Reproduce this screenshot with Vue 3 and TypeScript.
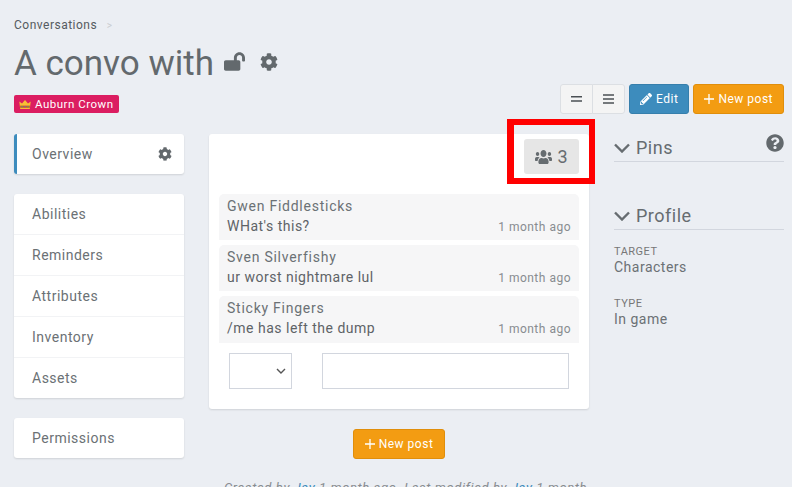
<script setup lang="ts">
const COG = 'M487.4 315.7l-42.6-24.6c4.3-23.2 4.3-47 0-70.2l42.6-24.6c4.9-2.8 7.1-8.6 5.5-14-11.1-35.6-30-67.8-54.7-94.6-3.8-4.1-10-5.1-14.8-2.3L380.8 110c-17.9-15.4-38.5-27.3-60.8-35.1V25.8c0-5.6-3.9-10.5-9.4-11.7-36.7-8.2-74.3-7.8-109.2 0-5.5 1.2-9.4 6.1-9.4 11.7V75c-22.2 7.9-42.8 19.8-60.8 35.1L88.7 85.5c-4.9-2.8-11-1.9-14.8 2.3-24.7 26.7-43.6 58.9-54.7 94.6-1.7 5.4.6 11.2 5.5 14L67.3 221c-4.3 23.2-4.3 47 0 70.2l-42.6 24.6c-4.9 2.8-7.1 8.6-5.5 14 11.1 35.6 30 67.8 54.7 94.6 3.8 4.1 10 5.1 14.8 2.3l42.6-24.6c17.9 15.4 38.5 27.3 60.8 35.1v49.2c0 5.6 3.9 10.5 9.4 11.7 36.7 8.2 74.3 7.8 109.2 0 5.5-1.2 9.4-6.1 9.4-11.7v-49.2c22.2-7.9 42.8-19.8 60.8-35.1l42.6 24.6c4.9 2.8 11 1.9 14.8-2.3 24.7-26.7 43.6-58.9 54.7-94.6 1.5-5.5-.7-11.3-5.6-14.1zM256 336c-44.1 0-80-35.9-80-80s35.9-80 80-80 80 35.9 80 80-35.9 80-80 80z'

const sideLinks = ['Abilities', 'Reminders', 'Attributes', 'Inventory', 'Assets']

const messages = [
  { author: 'Gwen Fiddlesticks', text: "WHat's this?", time: '1 month ago' },
  { author: 'Sven Silverfishy', text: 'ur worst nightmare lul', time: '1 month ago' },
  { author: 'Sticky Fingers', text: '/me has left the dump', time: '1 month ago' },
]
</script>

<template>
  <div class="page">
    <div class="crumbs">Conversations <span class="crumbs__sep">&gt;</span></div>
    <div class="title-row">
      <h1 class="title">A convo with</h1>
      <svg class="title-lock" viewBox="0 0 576 512"><path fill="currentColor" d="M423.5 0C339.5.3 272 69.5 272 153.5V224H48c-26.5 0-48 21.5-48 48v192c0 26.5 21.5 48 48 48h352c26.5 0 48-21.5 48-48V272c0-26.5-21.5-48-48-48h-48v-71.1c0-39.6 31.7-72.5 71.3-72.9 40-.4 72.7 32.1 72.7 72v80c0 13.3 10.7 24 24 24h32c13.3 0 24-10.7 24-24v-80C576 68 507.5-.3 423.5 0z" /></svg>
      <svg class="title-cog" viewBox="0 0 512 512"><path fill="currentColor" :d="COG" /></svg>
    </div>

    <div class="head-row">
      <span class="tag">
        <svg class="tag__crown" viewBox="0 0 12 9">
          <path fill="#f8bf35" d="M0.3 1.6 3 3.6 6 0 9 3.6 11.7 1.6 10.8 9H1.2Z" />
          <rect x="1.1" y="5.6" width="9.8" height="2.2" fill="#c9572f" />
          <circle cx="3" cy="6.7" r=".8" fill="#4fa36f" />
          <circle cx="6" cy="6.7" r=".8" fill="#7b57b8" />
          <circle cx="9" cy="6.7" r=".8" fill="#4fa36f" />
        </svg>
        Auburn Crown
      </span>
      <div class="toolbar">
        <div class="btn-group">
          <button class="btn btn--light">
            <svg class="bars" viewBox="0 0 11 10"><path d="M0 2.8h11M0 7h11" stroke="currentColor" stroke-width="1.6" /></svg>
          </button>
          <button class="btn btn--light">
            <svg class="bars" viewBox="0 0 11 10"><path d="M0 1h11M0 5h11M0 9h11" stroke="currentColor" stroke-width="1.5" /></svg>
          </button>
        </div>
        <button class="btn btn--blue">
          <svg class="icon icon--pencil" viewBox="0 0 512 512"><path fill="currentColor" d="M497.9 142.1l-46.1 46.1c-4.7 4.7-12.3 4.7-17 0l-111-111c-4.7-4.7-4.7-12.3 0-17l46.1-46.1c18.7-18.7 49.1-18.7 67.9 0l60.1 60.1c18.8 18.7 18.8 49.1 0 67.9zM284.2 99.8L21.6 362.4.4 483.9c-2.9 16.4 11.4 30.6 27.8 27.8l121.5-21.3 262.6-262.6c4.7-4.7 4.7-12.3 0-17l-111-111c-4.8-4.7-12.4-4.7-17.1 0zM124.1 339.9c-5.5-5.5-5.5-14.3 0-19.8l154-154c5.5-5.5 14.3-5.5 19.8 0s5.5 14.3 0 19.8l-154 154c-5.5 5.5-14.3 5.5-19.8 0zM88 424h48v36.3l-64.5 11.3-31.1-31.1L51.7 376H88v48z" /></svg>
          Edit
        </button>
        <button class="btn btn--orange">
          <svg class="icon" viewBox="0 0 10 10"><path d="M5 0v10M0 5h10" stroke="currentColor" stroke-width="1.3" /></svg>
          New post
        </button>
      </div>
    </div>

    <div class="columns">
      <aside class="sidebar">
        <div class="box box--active">
          <div class="side-link side-link--overview">
            Overview
            <svg class="side-cog" viewBox="0 0 512 512"><path fill="currentColor" :d="COG" /></svg>
          </div>
        </div>
        <div class="box">
          <div v-for="link in sideLinks" :key="link" class="side-link side-link--row">{{ link }}</div>
        </div>
        <div class="box">
          <div class="side-link side-link--perm">Permissions</div>
        </div>
      </aside>

      <main class="center">
        <section class="card">
          <div class="card__top">
            <div class="members">
              <svg class="members__icon" viewBox="0 32 640 448" preserveAspectRatio="none"><path fill="currentColor" d="M96 224c35.3 0 64-28.7 64-64s-28.7-64-64-64-64 28.7-64 64 28.7 64 64 64zm448 0c35.3 0 64-28.7 64-64s-28.7-64-64-64-64 28.7-64 64 28.7 64 64 64zm32 32h-64c-17.6 0-33.5 7.1-45.1 18.6 40.3 22.1 68.9 62 75.1 109.4h66c17.7 0 32-14.3 32-32v-32c0-35.3-28.7-64-64-64zm-256 0c61.9 0 112-50.1 112-112S381.9 32 320 32 208 82.1 208 144s50.1 112 112 112zm76.8 32h-8.3c-20.8 10-43.9 16-68.5 16s-47.6-6-68.5-16h-8.3C179.6 288 128 339.6 128 403.2V432c0 26.5 21.5 48 48 48h288c26.5 0 48-21.5 48-48v-28.8c0-63.6-51.6-115.2-115.2-115.2zm-223.7-13.4C161.5 263.1 145.6 256 128 256H64c-35.3 0-64 28.7-64 64v32c0 17.7 14.3 32 32 32h65.9c6.3-47.4 34.9-87.3 75.2-109.4z" /></svg>
              3
            </div>
          </div>
          <div class="messages">
            <div v-for="m in messages" :key="m.author" class="message">
              <div class="message__author">{{ m.author }}</div>
              <div class="message__line">
                <span>{{ m.text }}</span>
                <span class="message__time">{{ m.time }}</span>
              </div>
            </div>
          </div>
          <div class="reply">
            <div class="reply__select">
              <svg class="reply__chevron" viewBox="0 0 10 6"><path d="M1 1l4 4 4-4" fill="none" stroke="currentColor" stroke-width="1.4" /></svg>
            </div>
            <div class="reply__input"></div>
          </div>
        </section>
        <div class="center__action">
          <button class="btn btn--orange">
            <svg class="icon" viewBox="0 0 10 10"><path d="M5 0v10M0 5h10" stroke="currentColor" stroke-width="1.3" /></svg>
            New post
          </button>
        </div>
        <p class="footer">Created by <a>Jay</a> 1 month ago. Last modified by <a>Jay</a> 1 month ago.</p>
      </main>

      <aside class="right">
        <div class="right__block">
          <h3 class="right__title">
            <svg class="chev" viewBox="0 0 16 10"><path d="M1 1.5 8 8.5l7-7" fill="none" stroke="currentColor" stroke-width="2.4" /></svg>
            Pins
          </h3>
          <svg class="help" viewBox="0 0 512 512"><path fill="currentColor" d="M504 256c0 136.997-111.043 248-248 248S8 392.997 8 256C8 119.083 119.043 8 256 8s248 111.083 248 248zM262.655 90c-54.497 0-89.255 22.957-116.549 63.758-3.536 5.286-2.353 12.415 2.715 16.258l34.699 26.31c5.205 3.947 12.621 3.008 16.665-2.122 17.864-22.658 30.113-35.797 57.303-35.797 20.429 0 45.698 13.148 45.698 32.958 0 14.976-12.363 22.667-32.534 33.976C247.128 238.528 216 254.941 216 296v4c0 6.627 5.373 12 12 12h56c6.627 0 12-5.373 12-12v-1.333c0-28.462 83.186-29.647 83.186-106.667 0-58.002-60.165-102-116.531-102zM256 338c-25.365 0-46 20.635-46 46 0 25.364 20.635 46 46 46s46-20.636 46-46c0-25.365-20.635-46-46-46z" /></svg>
        </div>
        <div class="right__block right__block--profile">
          <h3 class="right__title">
            <svg class="chev" viewBox="0 0 16 10"><path d="M1 1.5 8 8.5l7-7" fill="none" stroke="currentColor" stroke-width="2.4" /></svg>
            Profile
          </h3>
          <div class="field">
            <div class="field__label">TARGET</div>
            <div class="field__value">Characters</div>
          </div>
          <div class="field">
            <div class="field__label">TYPE</div>
            <div class="field__value">In game</div>
          </div>
        </div>
      </aside>
    </div>

    <div class="highlight"></div>
  </div>
</template>

<style>
html, body {
  margin: 0;
  background: #ebeef3;
  overflow: hidden;
}
</style>

<style scoped>
.page {
  position: relative;
  height: 487px;
  overflow: hidden;
  box-sizing: border-box;
  padding: 18px 8px 0 14px;
  font-family: Roboto, sans-serif;
  font-size: 14px;
  letter-spacing: 0.5px;
  color: #6b7175;
}

.crumbs {
  font-size: 12px;
  line-height: 14px;
  color: #555b60;
}
.crumbs__sep {
  margin-left: 6px;
  font-size: 10px;
  color: #c9cccf;
}

.title-row {
  display: flex;
  align-items: center;
  height: 34px;
  margin-top: 14px;
}
.title {
  margin: 0;
  font-size: 35px;
  line-height: 34px;
  font-weight: 400;
  letter-spacing: 0;
  color: #63696d;
}
.title-lock {
  width: 21px;
  height: 19px;
  margin-left: 10px;
  margin-top: -6px;
  color: #63696d;
}
.title-cog {
  width: 18px;
  height: 18px;
  margin-left: 15px;
  margin-top: -5px;
  color: #63696d;
}

.head-row {
  display: flex;
  justify-content: space-between;
  align-items: flex-end;
  height: 33px;
}
.tag {
  display: inline-flex;
  align-items: center;
  gap: 4px;
  height: 18px;
  margin-bottom: 1px;
  padding: 0 5px;
  border-radius: 2px;
  background: #db1d61;
  color: #fff;
  font-size: 11.5px;
}
.tag__crown {
  width: 12px;
  height: 9px;
}

.toolbar {
  display: flex;
  gap: 4px;
}
.btn-group {
  display: flex;
}
.btn {
  display: inline-flex;
  align-items: center;
  justify-content: center;
  gap: 4px;
  height: 30px;
  box-sizing: border-box;
  padding: 0 10px;
  border: 1px solid transparent;
  border-radius: 3px;
  font-family: inherit;
  font-size: 12px;
  letter-spacing: 0.5px;
  color: #fff;
}
.btn--light {
  width: 33px;
  padding: 0;
  background: #f4f4f4;
  border-color: #dcdfe3;
  color: #4b5054;
}
.btn--light:first-child {
  border-radius: 3px 0 0 3px;
}
.btn--light:last-child {
  margin-left: -1px;
  border-radius: 0 3px 3px 0;
}
.btn--blue {
  background: #3d8cbd;
  border-color: #367fac;
}
.btn--orange {
  background: #f39c12;
  border-color: #e08e0b;
}
.bars {
  width: 11px;
  height: 10px;
}
.icon {
  width: 10px;
  height: 12px;
}
.icon--pencil {
  width: 12px;
}

.columns {
  display: grid;
  grid-template-columns: 170px 380px 170px;
  gap: 25px;
  align-items: start;
  margin-top: 20px;
}

.sidebar {
  display: flex;
  flex-direction: column;
  gap: 20px;
}
.box {
  background: #fff;
  border-radius: 3px;
  box-shadow: 0 1px 2px rgba(0, 0, 0, 0.12);
}
.box--active {
  border-left: 3px solid #3d8cbd;
}
.side-link {
  display: flex;
  align-items: center;
  justify-content: space-between;
  box-sizing: border-box;
  height: 40px;
  padding: 0 12px 0 18px;
}
.side-link--overview {
  padding-left: 15px;
}
.side-link--row {
  height: 41px;
  border-bottom: 1px solid #f2f3f5;
}
.side-link--row:last-child {
  height: 40px;
  border-bottom: 0;
}
.side-cog {
  width: 14px;
  height: 14px;
  color: #63696d;
}

.card {
  background: #fff;
  border-radius: 3px;
  box-shadow: 0 1px 2px rgba(0, 0, 0, 0.12);
  padding: 5px 10px 0;
  height: 275px;
  box-sizing: border-box;
}
.card__top {
  display: flex;
  justify-content: flex-end;
  height: 55px;
}
.members {
  display: flex;
  align-items: center;
  justify-content: center;
  gap: 5px;
  width: 55px;
  height: 35px;
  border-radius: 3px;
  background: #e6e6e6;
  font-size: 18px;
  letter-spacing: 0;
  color: #666c70;
}
.members__icon {
  width: 17px;
  height: 14px;
}

.messages {
  display: flex;
  flex-direction: column;
  gap: 5px;
}
.message {
  box-sizing: border-box;
  height: 46px;
  padding: 2px 8px 0;
  border-radius: 5px 5px 0 0;
  background: #f6f6f7;
  line-height: 20px;
}
.message:last-child {
  height: 47px;
}
.message__author {
  letter-spacing: 0.75px;
}
.message__line {
  display: flex;
  justify-content: space-between;
  color: #5e6367;
}
.message__time {
  margin-top: 1px;
  font-size: 12px;
  color: #888c90;
}

.reply {
  display: flex;
  gap: 30px;
  margin-top: 10px;
  padding: 0 10px;
}
.reply__select {
  display: flex;
  align-items: center;
  justify-content: flex-end;
  box-sizing: border-box;
  width: 63px;
  height: 36px;
  padding-right: 5px;
  border: 1px solid #d2d6de;
}
.reply__chevron {
  width: 10px;
  height: 6px;
  color: #555;
}
.reply__input {
  box-sizing: border-box;
  width: 247px;
  height: 36px;
  border: 1px solid #d2d6de;
}

.center__action {
  display: flex;
  justify-content: center;
  margin-top: 20px;
}
.center__action .btn {
  padding: 0 11px;
}
.footer {
  margin: 21px 0 0;
  padding-left: 13px;
  font-size: 13px;
  font-style: italic;
  letter-spacing: 0.6px;
  text-align: center;
  color: #888c90;
}
.footer a {
  color: #3d8cbd;
}

.right__block {
  position: relative;
}
.right__block--profile {
  margin-top: 40px;
}
.right__title {
  display: flex;
  align-items: center;
  gap: 6px;
  margin: 0;
  height: 27px;
  border-bottom: 1px solid #d2d6de;
  font-size: 18px;
  font-weight: 400;
  color: #666c70;
}
.chev {
  width: 16px;
  height: 10px;
}
.help {
  position: absolute;
  top: 0;
  right: 0;
  width: 18px;
  height: 18px;
  color: #63696d;
}
.field {
  margin-top: 21px;
  line-height: 16px;
}
.field__label {
  font-size: 11px;
  line-height: 15px;
  color: #777;
}
.right__title + .field {
  margin-top: 14px;
}

.highlight {
  position: absolute;
  left: 507px;
  top: 119px;
  width: 75px;
  height: 53px;
  border: solid #f00;
  border-width: 6px 6px 6px 7px;
}
</style>
